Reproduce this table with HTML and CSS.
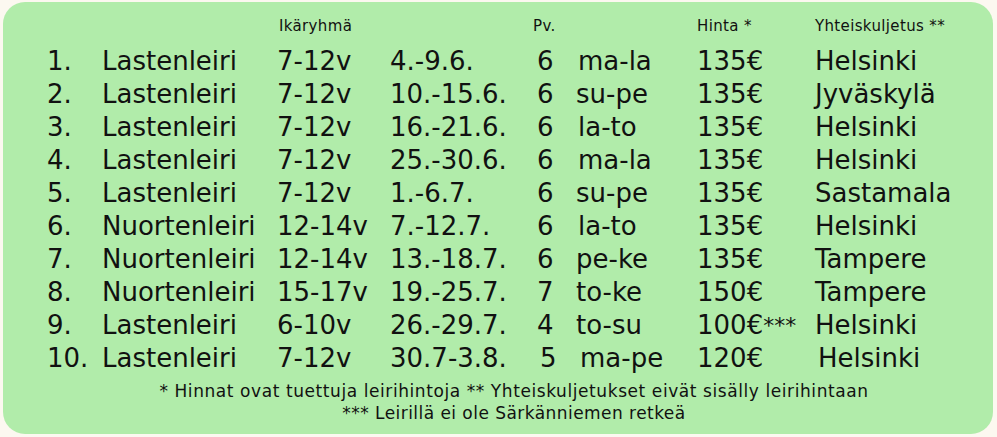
FILE: index.html
```html
<!DOCTYPE html>
<html lang="fi">
<head>
<meta charset="utf-8">
<title>Leirit</title>
<link rel="stylesheet" href="styles.css">
</head>
<body>
<div class="box">
  <div class="row head">
    <span></span><span></span><span class="h-age">Ikäryhmä</span><span></span><span class="h-pv">Pv.</span><span></span><span>Hinta *</span><span>Yhteiskuljetus **</span>
  </div>
  <div class="rows">
    <div class="row"><span>1.</span><span>Lastenleiri</span><span>7-12v</span><span>4.-9.6.</span><span>6</span><span class="s2">ma-la</span><span>135€</span><span>Helsinki</span></div>
    <div class="row"><span>2.</span><span>Lastenleiri</span><span>7-12v</span><span>10.-15.6.</span><span>6</span><span>su-pe</span><span>135€</span><span>Jyväskylä</span></div>
    <div class="row"><span>3.</span><span>Lastenleiri</span><span>7-12v</span><span>16.-21.6.</span><span>6</span><span class="s2">la-to</span><span>135€</span><span>Helsinki</span></div>
    <div class="row"><span>4.</span><span>Lastenleiri</span><span>7-12v</span><span>25.-30.6.</span><span>6</span><span class="s2">ma-la</span><span>135€</span><span>Helsinki</span></div>
    <div class="row"><span>5.</span><span>Lastenleiri</span><span>7-12v</span><span>1.-6.7.</span><span>6</span><span>su-pe</span><span>135€</span><span>Sastamala</span></div>
    <div class="row"><span>6.</span><span>Nuortenleiri</span><span>12-14v</span><span>7.-12.7.</span><span>6</span><span class="s2">la-to</span><span>135€</span><span>Helsinki</span></div>
    <div class="row"><span>7.</span><span>Nuortenleiri</span><span>12-14v</span><span>13.-18.7.</span><span>6</span><span>pe-ke</span><span>135€</span><span>Tampere</span></div>
    <div class="row"><span>8.</span><span>Nuortenleiri</span><span>15-17v</span><span>19.-25.7.</span><span>7</span><span>to-ke</span><span>150€</span><span>Tampere</span></div>
    <div class="row"><span>9.</span><span>Lastenleiri</span><span>6-10v</span><span>26.-29.7.</span><span>4</span><span>to-su</span><span>100€<span class="stars">***</span></span><span>Helsinki</span></div>
    <div class="row"><span>10.</span><span>Lastenleiri</span><span>7-12v</span><span>30.7-3.8.</span><span class="s3">5</span><span class="s4">ma-pe</span><span>120€</span><span class="s3">Helsinki</span></div>
  </div>
  <div class="foot">
    <p class="f1">* Hinnat ovat tuettuja leirihintoja ** Yhteiskuljetukset eivät sisälly leirihintaan</p>
    <p class="f2">*** Leirillä ei ole Särkänniemen retkeä</p>
  </div>
</div>
</body>
</html>
```

FILE: styles.css
```css
html, body {
  margin: 0;
  padding: 0;
}
body {
  background: #fcf8f0;
  font-family: "DejaVu Sans", sans-serif;
  color: #111;
  width: 997px;
  height: 437px;
  overflow: hidden;
}
.box {
  margin: 2px 0 0 3px;
  width: 990px;
  height: 432px;
  box-sizing: border-box;
  background: #b1ecaa;
  border-radius: 22px;
  padding: 12px 0 0 44px;
}
.row {
  display: grid;
  grid-template-columns: 55px 175px 113px 147px 39px 121px 118px auto;
  white-space: nowrap;
}
.head {
  font-size: 15px;
  line-height: 24px;
  height: 24px;
  letter-spacing: 0.35px;
}
.h-age { padding-left: 2px; }
.h-pv { margin-left: -4px; }
.rows {
  margin-top: 7px;
  font-size: 26px;
  line-height: 33px;
}
.s2 { padding-left: 2px; }
.s3 { padding-left: 3px; }
.s4 { padding-left: 4px; }
.stars {
  font-size: 22px;
  vertical-align: 1px;
}
.foot {
  margin: 5px 0 0 -12px;
  text-align: center;
  font-size: 17px;
  line-height: 22px;
}
.foot p {
  margin: 0;
}
.f1 { letter-spacing: 0.58px; }
.f2 { letter-spacing: 0.45px; }
```
